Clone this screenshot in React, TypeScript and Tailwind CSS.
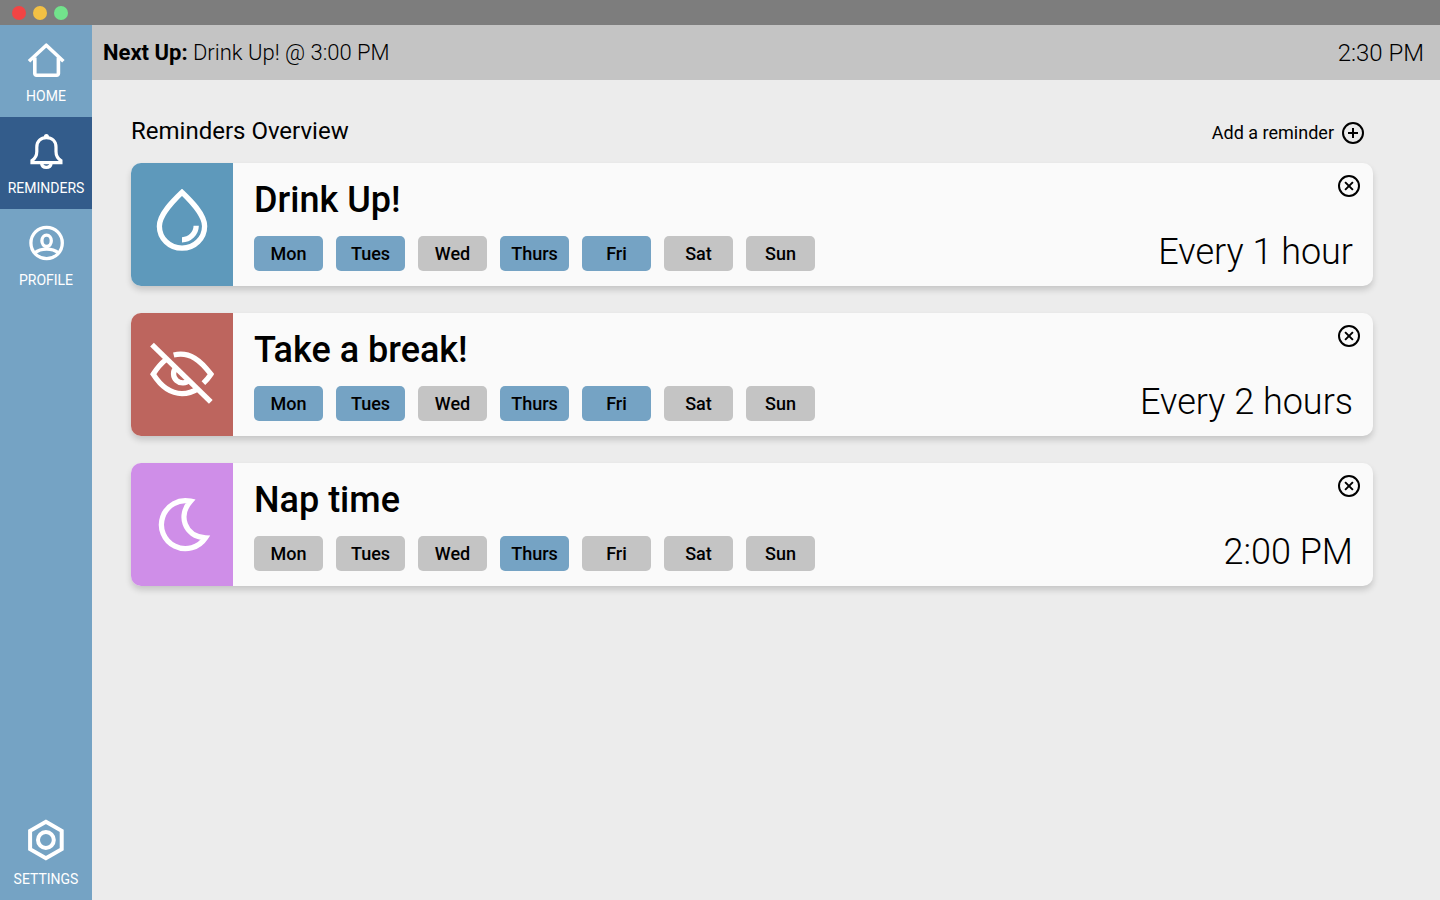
import { useState, type ReactNode } from "react";

const DAYS = ["Mon", "Tues", "Wed", "Thurs", "Fri", "Sat", "Sun"];

function HomeIcon() {
  return (
    <svg className="size-10" viewBox="0 0 40 40" fill="none" stroke="currentColor" strokeWidth="3.6" aria-hidden="true">
      <path d="M3 21.2 20.3 5.2 37.4 21.2" strokeLinejoin="round" />
      <path d="M8.8 17.5V33.6a1.6 1.6 0 0 0 1.6 1.6H30.8a1.6 1.6 0 0 0 1.6-1.6V17.5" />
    </svg>
  );
}

function BellIcon() {
  return (
    <svg className="size-10" viewBox="0 0 40 40" fill="none" stroke="currentColor" strokeWidth="3.2" aria-hidden="true">
      <path d="M6 30.6V28.6C9 26.6 10.8 23.5 10.8 19.5V15.2C10.8 9 14.8 5.6 20.4 5.6S30 9 30 15.2V19.5C30 23.5 31.8 26.6 34.9 28.6V30.6Z" />
      <circle cx="20.4" cy="4.4" r="2.5" fill="currentColor" stroke="none" />
      <path d="M15.6 31.5C15.9 34 17.8 35.4 20.3 35.4S24.8 34 25.1 31.5" />
    </svg>
  );
}

function ProfileIcon() {
  return (
    <svg className="size-10" viewBox="0 1 40 40" fill="none" stroke="currentColor" strokeWidth="3.3" aria-hidden="true">
      <circle cx="20.6" cy="20" r="15.7" />
      <ellipse cx="20.6" cy="17.8" rx="4.7" ry="5.7" />
      <path d="M8.8 29.8C15 24.8 26.2 24.8 32.4 29.8" />
    </svg>
  );
}

function SettingsIcon() {
  return (
    <svg className="h-12 w-10 shrink-0" viewBox="0 0 40 48" fill="none" stroke="currentColor" strokeWidth="4" aria-hidden="true">
      <path d="M19.9 2.7 35.7 11.8V30.2L19.9 39.3 4.1 30.2V11.8Z" />
      <circle cx="19.9" cy="21" r="7.9" />
    </svg>
  );
}

function DropIcon() {
  return (
    <svg className="size-[72px]" viewBox="0 1 72 72" fill="none" stroke="currentColor" strokeWidth="5.3" aria-hidden="true">
      <path d="M36 4.3C28 12 13.4 26 13.4 38.2A22.6 22 0 0 0 58.6 38.2C58.6 26 44 12 36 4.3Z" />
      <path d="M36 51.8A14.2 14.2 0 0 0 50.2 37.8" />
    </svg>
  );
}

function EyeOffIcon() {
  return (
    <svg className="size-[72px]" viewBox="0 0 72 72" fill="none" stroke="currentColor" strokeWidth="5.3" aria-hidden="true">
      <path d="M6 5.6 64.8 62.9" />
      <path d="M27.7 16C44 12 55 22 64.9 35.2Q61.5 40.3 57.4 44.2" />
      <path d="M20 20.5Q13 26 7.2 35.2C14 46 24 54.6 36 54.6Q44.5 54.6 51.5 50" />
      <path d="M30 28.5A8.9 8.9 0 1 0 43.5 41" />
    </svg>
  );
}

function MoonIcon() {
  return (
    <svg className="size-[72px]" viewBox="-1 0 72 72" fill="none" stroke="currentColor" strokeWidth="5.3" aria-hidden="true">
      <path d="M43.5 12.2C31 26 37 47.5 58.5 48.8A24 24 0 1 1 43.5 12.2Z" />
    </svg>
  );
}

function CirclePlusIcon() {
  return (
    <svg className="size-6" viewBox="0 0 24 24" fill="none" stroke="currentColor" strokeWidth="2" aria-hidden="true">
      <circle cx="12" cy="12" r="10" />
      <path d="M12 7V17M7 12H17" />
    </svg>
  );
}

function CircleXIcon() {
  return (
    <svg className="size-6" viewBox="0 0 24 24" fill="none" stroke="currentColor" strokeWidth="2" aria-hidden="true">
      <circle cx="12" cy="12" r="10" />
      <path d="M8.1 8.1 15.9 15.9M15.9 8.1 8.1 15.9" />
    </svg>
  );
}

type Reminder = {
  title: string;
  schedule: string;
  days: string[];
  tile: string;
  icon: ReactNode;
};

const INITIAL: Reminder[] = [
  { title: "Drink Up!", schedule: "Every 1 hour", days: ["Mon", "Tues", "Thurs", "Fri"], tile: "bg-[#5e99bb]", icon: <DropIcon /> },
  { title: "Take a break!", schedule: "Every 2 hours", days: ["Mon", "Tues", "Thurs", "Fri"], tile: "bg-[#bd655e]", icon: <EyeOffIcon /> },
  { title: "Nap time", schedule: "2:00 PM", days: ["Thurs"], tile: "bg-[#cf8ee8]", icon: <MoonIcon /> },
];

function NavItem({ label, active = false, children }: { label: string; active?: boolean; children: ReactNode }) {
  return (
    <a
      href={"#" + label.toLowerCase()}
      aria-current={active ? "page" : undefined}
      className={
        "flex h-[92px] flex-col items-center justify-end pb-[11px] text-sm leading-5 text-white " +
        (active ? "bg-[#335c8b]" : "")
      }
    >
      <span className="mb-1 flex h-11 items-center">{children}</span>
      {label}
    </a>
  );
}

function ReminderCard({ reminder, onToggle, onRemove }: { reminder: Reminder; onToggle: (day: string) => void; onRemove: () => void }) {
  return (
    <li className="flex overflow-hidden rounded-[10px] bg-[#fafafa] shadow-[0_4px_6px_rgba(0,0,0,0.16)]">
      <div className={"flex w-[102px] shrink-0 items-center justify-center text-white " + reminder.tile}>{reminder.icon}</div>
      <div className="flex grow flex-col pt-4 pb-[15px] pl-[21px]">
        <h2 className="text-4xl leading-[42px] font-medium">{reminder.title}</h2>
        <div className="mt-[15px] flex gap-[13px]">
          {DAYS.map((day) => {
            const on = reminder.days.includes(day);
            return (
              <button
                key={day}
                type="button"
                aria-pressed={on}
                onClick={() => onToggle(day)}
                className={"h-[35px] w-[69px] rounded-[5px] text-lg leading-5 font-medium " + (on ? "bg-[#75a3c4]" : "bg-[#c4c4c4]")}
              >
                {day}
              </button>
            );
          })}
        </div>
      </div>
      <div className="flex flex-col items-end justify-between pt-[11px] pb-[13px]">
        <button type="button" aria-label={"Remove " + reminder.title} onClick={onRemove} className="mr-3">
          <CircleXIcon />
        </button>
        <p className="mr-5 text-4xl leading-[42px] font-light whitespace-nowrap">{reminder.schedule}</p>
      </div>
    </li>
  );
}

export default function App() {
  const [reminders, setReminders] = useState(INITIAL);

  const toggle = (title: string, day: string) =>
    setReminders((list) =>
      list.map((r) =>
        r.title === title
          ? { ...r, days: r.days.includes(day) ? r.days.filter((d) => d !== day) : [...r.days, day] }
          : r,
      ),
    );

  return (
    <div className="flex min-h-screen flex-col bg-[#ececec] font-['Roboto',sans-serif] text-black">
      <div className="flex h-[25px] items-center gap-[7px] bg-[#7d7d7d] px-3">
        <span className="size-3.5 rounded-full bg-[#f24444]" />
        <span className="size-3.5 rounded-full bg-[#f2c044]" />
        <span className="size-3.5 rounded-full bg-[#72e38c]" />
      </div>
      <div className="flex grow">
        <nav className="flex w-[92px] shrink-0 flex-col bg-[#75a3c4]">
          <NavItem label="HOME"><HomeIcon /></NavItem>
          <NavItem label="REMINDERS" active><BellIcon /></NavItem>
          <NavItem label="PROFILE"><ProfileIcon /></NavItem>
          <div className="mt-auto">
            <NavItem label="SETTINGS"><SettingsIcon /></NavItem>
          </div>
        </nav>
        <div className="flex grow flex-col">
          <header className="flex h-[55px] items-center justify-between bg-[#c4c4c4] pr-4 pl-[11px] font-light">
            <p className="text-[22px]"><b className="font-bold">Next Up:</b> Drink Up! @ 3:00 PM</p>
            <time className="text-2xl">2:30 PM</time>
          </header>
          <main className="pt-[35px] pr-[67px] pl-[39px]">
            <div className="mb-3 flex h-9 items-baseline justify-between pr-2">
              <h1 className="text-2xl">Reminders Overview</h1>
              <button type="button" className="flex items-center gap-[7px] text-lg">
                Add a reminder
                <CirclePlusIcon />
              </button>
            </div>
            <ul className="flex flex-col gap-[27px]">
              {reminders.map((r) => (
                <ReminderCard
                  key={r.title}
                  reminder={r}
                  onToggle={(day) => toggle(r.title, day)}
                  onRemove={() => setReminders((list) => list.filter((x) => x.title !== r.title))}
                />
              ))}
            </ul>
          </main>
        </div>
      </div>
    </div>
  );
}
